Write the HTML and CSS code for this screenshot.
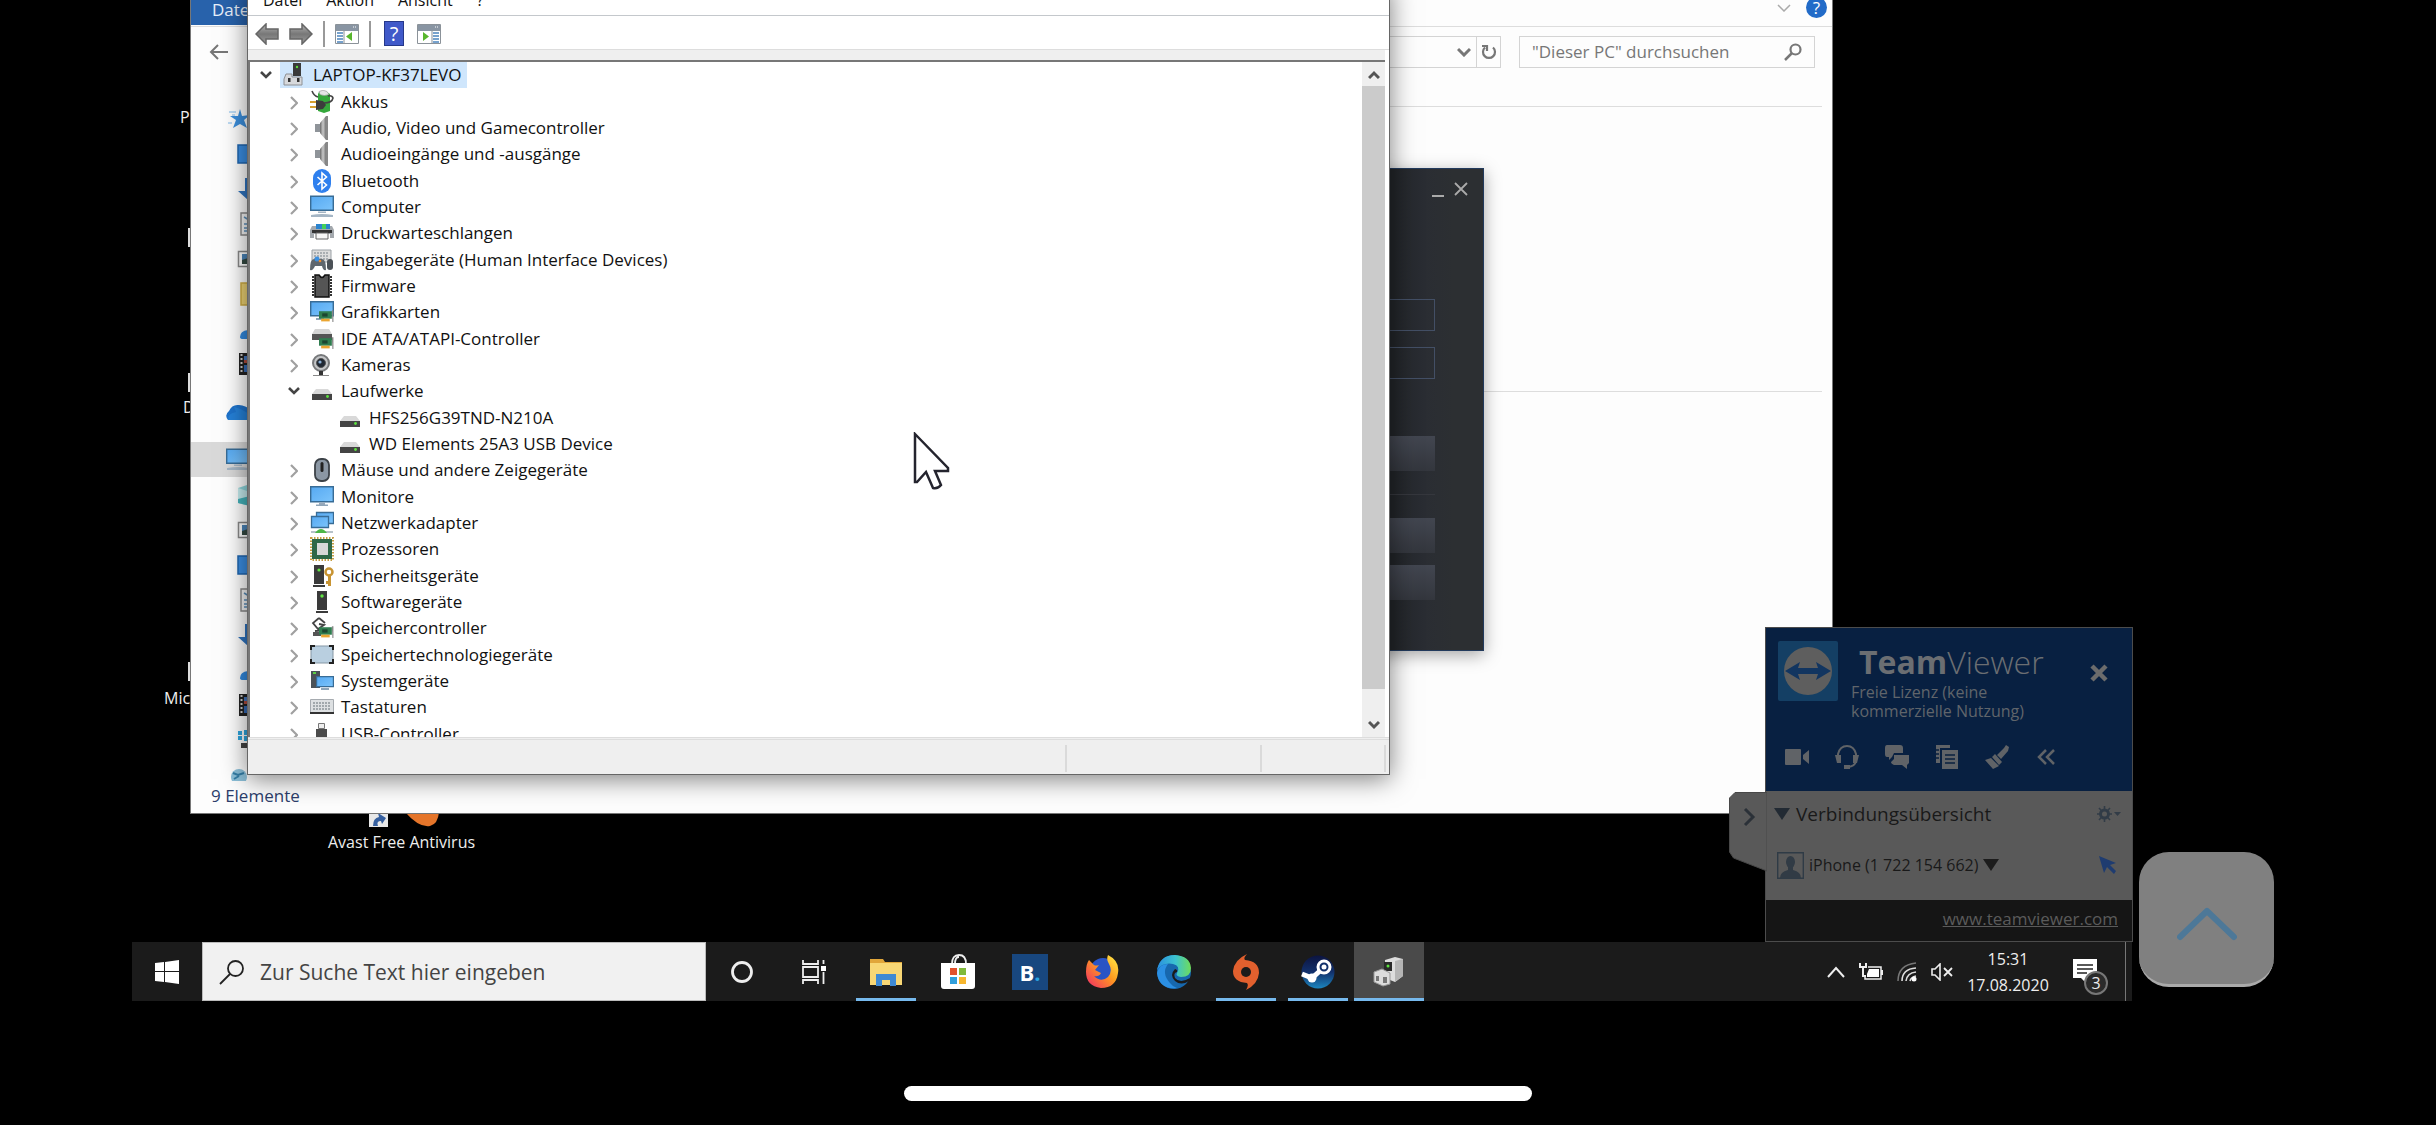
FILE: index.html
```html
<!DOCTYPE html>
<html lang="de">
<head>
<meta charset="utf-8">
<title>Geräte-Manager</title>
<link rel="stylesheet" href="styles.css">
</head>
<body>
<svg class="sprite" aria-hidden="true">
  <defs>
    <linearGradient id="blue" x1="0" y1="0" x2="1" y2="1"><stop offset="0" stop-color="#56a9f2"/><stop offset="1" stop-color="#7cc4fb"/></linearGradient>
    <linearGradient id="metal" x1="0" x2="1"><stop offset="0" stop-color="#6a6a6a"/><stop offset=".5" stop-color="#c9c9c9"/><stop offset="1" stop-color="#777"/></linearGradient>
    <linearGradient id="gray" x1="0" y1="0" x2="0" y2="1"><stop offset="0" stop-color="#b4b4b4"/><stop offset=".5" stop-color="#777"/><stop offset="1" stop-color="#9c9c9c"/></linearGradient>
    <linearGradient id="edge" x1="0" y1="0" x2="1" y2="0"><stop offset="0" stop-color="#2a8fe0"/><stop offset=".55" stop-color="#3cc3cf"/><stop offset="1" stop-color="#6fdc5a"/></linearGradient>
    <linearGradient id="fire" x1="1" y1="0" x2="0" y2="1"><stop offset="0" stop-color="#fff04a"/><stop offset=".45" stop-color="#ff9a1f"/><stop offset="1" stop-color="#f0256b"/></linearGradient>
    <linearGradient id="steam" x1="0" y1="0" x2="0" y2="1"><stop offset="0" stop-color="#0c1440"/><stop offset=".5" stop-color="#12306b"/><stop offset="1" stop-color="#1c86bf"/></linearGradient>
  </defs>
  <symbol id="open" viewBox="0 0 12 8"><path d="M1 1l5 5 5-5" fill="none" stroke="#444" stroke-width="2.6"/></symbol>
  <symbol id="closed" viewBox="0 0 8 14"><path d="M1 1l6 6-6 6" fill="none" stroke="#a0a0a0" stroke-width="2.2"/></symbol>
  <symbol id="card" viewBox="0 0 14 12"><path d="M12 1h1.500v11h-1z" fill="#888"/><path d="M0 2h12v7H0z" fill="#2f7d4f"/><path d="M3 4h5v3H3z" fill="#1c4630"/><path d="M2 9h8v2.500H2z" fill="#eaa531"/></symbol>
  <symbol id="pcroot" viewBox="0 0 24 24"><path d="M11 0h8v13h-8z" fill="#3b3b3b"/><circle cx="15" cy="4" r="1.200" fill="#5bdc3c"/><path d="M4 11h6v3h10v8H2v-6z" fill="#d7d9dc" stroke="#8e9094" stroke-width="1"/><path d="M6 15h2.500v4H6zM15 15h2.500v4H15z" fill="#333"/></symbol>
  <symbol id="battery" viewBox="0 0 24 24"><path d="M9 2l6-1 5 3v17l-6 2-6-2V4z" fill="#35a83b"/><path d="M9 1.500q4-2.500 8 0l2 3q-5 2-9 0z" fill="#e5e5e5" stroke="#999" stroke-width=".6"/><path d="M2 1q2 5 6 6M14 13q8 0 9-5-1-3-5-2" fill="none" stroke="#444" stroke-width="1.600"/><path d="M6 10l7 1 3 4-3 4-7 1z" fill="#3c3c3c"/><path d="M0 12h6M0 17h6" stroke="#d6a030" stroke-width="1.800"/></symbol>
  <symbol id="speaker" viewBox="0 0 24 24"><path d="M5 8h5v8H5z" fill="#8f9499"/><path d="M10 7l6-7v24l-6-7z" fill="url(#metal)"/><path d="M16 0h2v24h-2z" fill="#888"/></symbol>
  <symbol id="bluetooth" viewBox="0 0 24 24"><rect x="3" y="0" width="18" height="24" rx="9" fill="#2f80ee"/><path d="M7.500 8l9 8-4.500 4V4l4.500 4-9 8" fill="none" stroke="#fff" stroke-width="1.600"/></symbol>
  <symbol id="monitor" viewBox="0 0 24 24"><path d="M.7 1.700h22.600v15H.7z" fill="url(#blue)" stroke="#386c96" stroke-width="1.400"/><path d="M9 17.500h6v2.500H9z" fill="#9ab"/><path d="M6 19.500h12v1.500H6z" fill="#8fa5b8"/></symbol>
  <symbol id="computer" viewBox="0 0 24 24"><path d="M.7 1.200h22.600v14H.7z" fill="url(#blue)" stroke="#386c96" stroke-width="1.400"/><path d="M8 16.500h8v1.500H8zM1 20q11-2 22 0v2H1z" fill="#a5b6c5"/></symbol>
  <symbol id="printer" viewBox="0 0 24 24"><path d="M6 3h14v6H6z" fill="#2b83cf"/><path d="M12 3h4v5h-4z" fill="#44cf59"/><path d="M2 5h4v3h14V5h2l2 4v8h-4v-4H4v4H0V9z" fill="#a3a8ad"/><path d="M2 9h20v3H2z" fill="#333"/><path d="M6 12h12v6H6z" fill="#f7f7f7" stroke="#666"/></symbol>
  <symbol id="hid" viewBox="0 0 24 24"><path d="M2 2h19v12H2z" fill="#ddd" stroke="#9ba1a6"/><path d="M4 5h15M4 8h15M4 11h15" stroke="#989ea4" stroke-width="1.500" stroke-dasharray="2 1"/><path d="M0 22q0-11 4-11h8q4 0 4 11-3 1-4-4H5q-2 5-5 4z" fill="#5f676e"/><circle cx="7" cy="11" r="2.500" fill="#3b8fe0"/><circle cx="10" cy="13" r="1.300" fill="#f08c2c"/><rect x="17" y="11" width="6" height="11" rx="3" fill="#4b5157"/></symbol>
  <symbol id="chip" viewBox="0 0 24 24"><path d="M3 2v21M21 2v21" stroke="#333" stroke-width="2" stroke-dasharray="2 1"/><path d="M5 1h4q3 5 6 0h4v22H5z" fill="#555" stroke="#111" stroke-width="1.500"/></symbol>
  <symbol id="gpu" viewBox="0 0 24 24"><path d="M.7 1.700h22.600v14H.7z" fill="url(#blue)" stroke="#386c96" stroke-width="1.400"/><path d="M6 18h8v2H6z" fill="#8fa5b8"/><use href="#card" x="9" y="9" width="15" height="13"/></symbol>
  <symbol id="ide" viewBox="0 0 24 24"><path d="M5 2h14l3 5H2z" fill="#d5d5d5"/><path d="M2 7h20v6H2z" fill="#555"/><use href="#card" x="9" y="9" width="15" height="13"/></symbol>
  <symbol id="camera" viewBox="0 0 24 24"><circle cx="11" cy="10" r="8" fill="#c3c5c7" stroke="#77797b" stroke-width="2"/><circle cx="11" cy="10" r="4.500" fill="#202833" stroke="#555"/><circle cx="10" cy="9" r="1.600" fill="#8ab0d7"/><path d="M9 18h4v4H9z" fill="#333"/><path d="M3 22.500h16" stroke="#888"/></symbol>
  <symbol id="drive" viewBox="0 0 24 24"><path d="M6 10h12l4 5H2z" fill="#d9d9d9"/><path d="M2 15h20v6H2z" fill="#444"/><circle cx="17.500" cy="17.500" r="1.400" fill="#5ce23f"/></symbol>
  <symbol id="mouse" viewBox="0 0 24 24"><rect x="5" y="1" width="14" height="22" rx="6" fill="#8b97a4" stroke="#3c4248" stroke-width="1.800"/><rect x="10.500" y="4" width="3" height="10" rx="1.500" fill="#222"/></symbol>
  <symbol id="network" viewBox="0 0 24 24"><path d="M6.500 1.500h17v11h-17z" fill="url(#blue)" stroke="#386c96" stroke-width="1.300"/><path d="M1.500 5.500h17v11h-17z" fill="url(#blue)" stroke="#386c96" stroke-width="1.300"/><path d="M1 20h22v2H1z" fill="#b7c2c9"/><path d="M5 22q6-8 12 0z" fill="#4cb748"/></symbol>
  <symbol id="cpu" viewBox="0 0 24 24"><path d="M1 1h22v22H1z" fill="none" stroke="#c69e43" stroke-width="2" stroke-dasharray="1.500 1.500"/><path d="M2 2h20v20H2z" fill="#2f6848"/><path d="M7 6h11v12H7z" fill="#d8d8d8"/></symbol>
  <symbol id="security" viewBox="0 0 24 24"><path d="M4 1h10v19H4zM3 21h12v2H3z" fill="#3a3a3a"/><circle cx="9" cy="6" r="1.600" fill="#61e544"/><circle cx="19" cy="8" r="3.500" fill="none" stroke="#c89432" stroke-width="2.500"/><path d="M18 11h3v11h-3zM16 17h2v3h-2z" fill="#c89432"/></symbol>
  <symbol id="software" viewBox="0 0 24 24"><path d="M7 1h10v19H7zM6 21h12v2H6z" fill="#3a3a3a"/><circle cx="12" cy="6" r="1.700" fill="#61e544"/></symbol>
  <symbol id="storagectl" viewBox="0 0 24 24"><path d="M9 2l6 5M9 2L3 7l5 6 6-4-5-1M5 15l12-1" fill="none" stroke="#444" stroke-width="1.800"/><path d="M3 16h8v4H3z" fill="#555"/><use href="#card" x="9" y="9" width="15" height="13"/></symbol>
  <symbol id="storagetech" viewBox="0 0 24 24"><rect x="1" y="3" width="22" height="17" rx="2" fill="#b9cfe0" stroke="#8597a5"/><path d="M1 7V3h4M19 3h4v4M23 16v4h-4M5 20H1v-4" fill="none" stroke="#222" stroke-width="2"/></symbol>
  <symbol id="system" viewBox="0 0 24 24"><path d="M1 2h9v17H1z" fill="#4a5157"/><path d="M3 3h3v2H3z" fill="#5ccf45"/><path d="M6.600 7.600h16.800v10H6.600z" fill="url(#blue)" stroke="#386c96" stroke-width="1.200"/><path d="M11 19h8v2h-8z" fill="#8fa5b8"/></symbol>
  <symbol id="keyboard" viewBox="0 0 24 24"><path d="M.5 4.500h23v13H.5z" fill="#dde0e2" stroke="#a6abb0"/><path d="M3 8h18M3 11h18M3 14h18" stroke="#8d959b" stroke-width="1.600" stroke-dasharray="2 1"/><path d="M0 17h24v2H0z" fill="#333"/></symbol>
  <symbol id="usb" viewBox="0 0 24 24"><path d="M8.500 1.500h6v5h-6z" fill="#eee" stroke="#777"/><path d="M6 7h11v17H6z" fill="#4b4b4b"/></symbol>

  <symbol id="n-star" viewBox="0 0 24 24"><path d="M14 2l2 7 8-1-6 5 3 8-7-4-7 4 3-8-6-4 8 0z" fill="#3c8fdd"/><path d="M3 5h7M2 16h4M6 8h3" stroke="#7db8ea"/></symbol>
  <symbol id="n-desktop" viewBox="0 0 24 24"><path d="M1 3h23v18H1z" fill="#3a8de2" stroke="#1f65b0" stroke-width="1.500"/></symbol>
  <symbol id="n-down" viewBox="0 0 24 24"><path d="M8 1h6v13h7L11 23 1 14h7z" fill="#2f74c0"/></symbol>
  <symbol id="n-doc" viewBox="0 0 24 24"><path d="M4 1h17v22H4z" fill="#f4f4f4" stroke="#888" stroke-width="1.400"/><path d="M7 5l5 3M7 12h9M7 16h9M7 19h9" stroke="#5c8fba" stroke-width="1.500"/></symbol>
  <symbol id="n-pic" viewBox="0 0 24 24"><path d="M1.500 4.500h22v15h-22z" fill="#fff" stroke="#888" stroke-width="1.500"/><path d="M5 7h18v10H5z" fill="#4d86ba"/><path d="M5 13l6-2 12 4v2H5z" fill="#344a43"/></symbol>
  <symbol id="n-folder" viewBox="0 0 24 24"><path d="M4 1h18v22H4z" fill="#eed374" stroke="#d0ad43" stroke-width="1.500"/></symbol>
  <symbol id="n-cloudlet" viewBox="0 0 24 24"><path d="M3 20q0-6 8-7v9H6q-3 0-3-2z" fill="#328ae0"/></symbol>
  <symbol id="n-film" viewBox="0 0 24 24"><path d="M2 1h22v22H2z" fill="#222"/><path d="M4.500 2v20" stroke="#ccc" stroke-width="2" stroke-dasharray="2 2"/><path d="M7 4h13v7H7z" fill="#4576bd"/><path d="M7 13h13v7H7z" fill="#3469b5"/><path d="M7 8h6v3H7z" fill="#b04b3e"/></symbol>
  <symbol id="n-onedrive" viewBox="0 0 24 24"><path d="M2 20q-4-5 1-9 3-7 10-6 8 1 12 5v10z" fill="#1e73cc"/><path d="M8 7q7 1 16 8v5H2q0-7 8-8z" fill="#2a8ae0" opacity=".6"/></symbol>
  <symbol id="n-cube" viewBox="0 0 24 24"><path d="M1 5l12-4 11 4v15l-11 3-12-3z" fill="#8fd6dc"/><path d="M1 5l12 4v14L1 20z" fill="#c5ecee"/><path d="M1 16l12-3v10L1 20z" fill="#45b3bb"/></symbol>
  <symbol id="n-win" viewBox="0 0 24 24"><path d="M1 3h4v4H1zM7 2h6v5H7zM1 8h4v4H1zM7 8h6v5H7z" fill="#2fa5dd"/><path d="M4 15h20v5H4z" fill="#444"/></symbol>
  <symbol id="n-net" viewBox="0 0 24 24"><circle cx="13" cy="14" r="8" fill="#8bbfd8"/><path d="M7 10l5 2 6-2M8 16l5-3" stroke="#347da5" stroke-width="2" fill="none"/></symbol>
</svg>

<main class="remote">
  <div class="desktop">
    <span class="shortcut shortcut-p">P</span>
    <span class="shortcut shortcut-d">D</span>
    <span class="shortcut shortcut-mic">Mic</span>
    <a class="shortcut shortcut-avast" href="#">
      <svg width="72" height="16" viewBox="0 0 72 16"><path d="M0 0h19v15H0z" fill="#e8e8e8"/><path d="M4 14q0-8 6-9l-1-4 8 5-4 6-1-3q-5 0-3 5z" fill="#355f9f"/><path d="M36 0q14 16 25 14Q69 12 70 0z" fill="#e5752a"/></svg>
      Avast Free Antivirus
    </a>
    <i class="badge badge-a"></i>
    <i class="badge badge-b"></i>
    <i class="badge badge-c"></i>

    <section class="window explorer" aria-label="Dieser PC">
      <header class="ribbon">
        <button class="ribbon-tab">Date</button>
        <div class="ribbon-end">
          <svg width="14" height="8" viewBox="0 0 14 8"><path d="M1 1l6 6 6-6" fill="none" stroke="#aaa" stroke-width="1.500"/></svg>
          <button class="help-round" aria-label="Hilfe">?</button>
        </div>
      </header>
      <div class="addressbar">
        <button class="plain back" aria-label="Zurück"><svg width="20" height="16" viewBox="0 0 20 16"><path d="M9 1L2 8l7 7M2 8h17" fill="none" stroke="#777" stroke-width="2"/></svg></button>
        <div class="address">
          <button class="plain" aria-label="Verlauf"><svg width="14" height="10" viewBox="0 0 14 10"><path d="M1 2l6 6 6-6" fill="none" stroke="#777" stroke-width="3"/></svg></button>
          <button class="plain refresh" aria-label="Aktualisieren"><svg width="16" height="18" viewBox="0 0 16 18"><path d="M12 4.500A6 6 0 1 1 4 4.500M1 3h5v5" fill="none" stroke="#777" stroke-width="2.200"/></svg></button>
        </div>
        <label class="searchbox">
          <input type="search" placeholder="&quot;Dieser PC&quot; durchsuchen" aria-label="Dieser PC durchsuchen">
          <svg width="18" height="18" viewBox="0 0 18 18"><circle cx="11.500" cy="6.500" r="5" fill="none" stroke="#777" stroke-width="2.200"/><path d="M8 10l-7 7" stroke="#777" stroke-width="2.500"/></svg>
        </label>
      </div>
      <div class="explorer-main">
        <nav class="nav" aria-label="Navigation">
          <a href="#" class="top"><svg><use href="#n-star"/></svg></a>
          <a href="#"><svg><use href="#n-desktop"/></svg></a>
          <a href="#"><svg><use href="#n-down"/></svg></a>
          <a href="#"><svg><use href="#n-doc"/></svg></a>
          <a href="#"><svg><use href="#n-pic"/></svg></a>
          <a href="#"><svg><use href="#n-folder"/></svg></a>
          <a href="#"><svg><use href="#n-cloudlet"/></svg></a>
          <a href="#"><svg><use href="#n-film"/></svg></a>
          <a href="#" class="top group"><svg><use href="#n-onedrive"/></svg></a>
          <a href="#" class="top group current"><svg><use href="#computer"/></svg></a>
          <a href="#"><svg><use href="#n-cube"/></svg></a>
          <a href="#"><svg><use href="#n-pic"/></svg></a>
          <a href="#"><svg><use href="#n-desktop"/></svg></a>
          <a href="#"><svg><use href="#n-doc"/></svg></a>
          <a href="#"><svg><use href="#n-down"/></svg></a>
          <a href="#"><svg><use href="#n-cloudlet"/></svg></a>
          <a href="#"><svg><use href="#n-film"/></svg></a>
          <a href="#"><svg><use href="#n-win"/></svg></a>
          <a href="#" class="top"><svg><use href="#n-net"/></svg></a>
        </nav>
        <div class="files"><hr><hr></div>
      </div>
      <footer class="explorer-status"><span>9 Elemente</span></footer>
    </section>

    <section class="window steam" aria-label="Anmeldung">
      <header class="steam-title">
        <button class="plain" aria-label="Minimieren"><svg width="12" height="16" viewBox="0 0 12 16"><path d="M0 14h12" stroke="#aaa" stroke-width="2"/></svg></button>
        <button class="plain" aria-label="Schließen"><svg width="14" height="14" viewBox="0 0 14 14"><path d="M1 1l12 12M13 1L1 13" stroke="#aaa" stroke-width="1.800"/></svg></button>
      </header>
      <form class="steam-form">
        <input type="text" aria-label="Name">
        <input type="password" aria-label="Kennwort">
        <button type="button" class="login" aria-label="Anmelden"></button>
        <hr>
        <button type="button" aria-label="Konto erstellen"></button>
        <button type="button" aria-label="Hilfe"></button>
      </form>
    </section>

    <section class="window devmgr" aria-label="Geräte-Manager">
      <nav class="menubar"><button>Datei</button><button>Aktion</button><button>Ansicht</button><button>?</button></nav>
      <div class="toolbar">
        <button class="plain" aria-label="Zurück"><svg width="24" height="22" viewBox="0 0 24 22"><path d="M1 11L11 1v5h12v10H11v5z" fill="url(#gray)" stroke="#666" stroke-width="1.500"/></svg></button>
        <button class="plain" aria-label="Vor"><svg width="24" height="22" viewBox="0 0 24 22"><path d="M23 11L13 1v5H1v10h12v5z" fill="url(#gray)" stroke="#666" stroke-width="1.500"/></svg></button>
        <i class="divider"></i>
        <button class="plain" aria-label="Struktur"><svg width="24" height="20" viewBox="0 0 24 20"><path d="M.5.500h23v19H.5z" fill="#fff" stroke="#8b9299"/><path d="M1 1h22v6H1z" fill="#8995a3"/><path d="M18 3h4" stroke="#fff" stroke-dasharray="1 1"/><path d="M2 9h6M2 12h6M2 15h6M2 18h6" stroke="#4b84bd" stroke-width="1.300"/><path d="M9 7v12" stroke="#8b9299"/><path d="M17 8v9l-6-4.500z" fill="#58b62d"/></svg></button>
        <i class="divider"></i>
        <button class="plain help-square" aria-label="Hilfe">?</button>
        <button class="plain" aria-label="Aktionen"><svg width="24" height="20" viewBox="0 0 24 20"><path d="M.5.500h23v19H.5z" fill="#fff" stroke="#8b9299"/><path d="M1 1h22v6H1z" fill="#8995a3"/><path d="M18 3h4" stroke="#fff" stroke-dasharray="1 1"/><path d="M16 9h6M16 12h6M16 15h6M16 18h6" stroke="#4b84bd" stroke-width="1.300"/><path d="M15 7v12" stroke="#8b9299"/><path d="M6 8v9l6-4.500z" fill="#58b62d"/></svg></button>
      </div>
      <div class="treebox">
        <ul class="tree">
          <li class="root"><svg class="tw"><use href="#open" width="12" height="8" x="8" y="9"/></svg><span class="selected"><svg><use href="#pcroot"/></svg>LAPTOP-KF37LEVO</span></li>
          <li><svg class="tw"><use href="#closed" width="8" height="14" x="10" y="7"/></svg><svg><use href="#battery"/></svg>Akkus</li>
          <li><svg class="tw"><use href="#closed" width="8" height="14" x="10" y="7"/></svg><svg><use href="#speaker"/></svg>Audio, Video und Gamecontroller</li>
          <li><svg class="tw"><use href="#closed" width="8" height="14" x="10" y="7"/></svg><svg><use href="#speaker"/></svg>Audioeingänge und -ausgänge</li>
          <li><svg class="tw"><use href="#closed" width="8" height="14" x="10" y="7"/></svg><svg><use href="#bluetooth"/></svg>Bluetooth</li>
          <li><svg class="tw"><use href="#closed" width="8" height="14" x="10" y="7"/></svg><svg><use href="#computer"/></svg>Computer</li>
          <li><svg class="tw"><use href="#closed" width="8" height="14" x="10" y="7"/></svg><svg><use href="#printer"/></svg>Druckwarteschlangen</li>
          <li><svg class="tw"><use href="#closed" width="8" height="14" x="10" y="7"/></svg><svg><use href="#hid"/></svg>Eingabegeräte (Human Interface Devices)</li>
          <li><svg class="tw"><use href="#closed" width="8" height="14" x="10" y="7"/></svg><svg><use href="#chip"/></svg>Firmware</li>
          <li><svg class="tw"><use href="#closed" width="8" height="14" x="10" y="7"/></svg><svg><use href="#gpu"/></svg>Grafikkarten</li>
          <li><svg class="tw"><use href="#closed" width="8" height="14" x="10" y="7"/></svg><svg><use href="#ide"/></svg>IDE ATA/ATAPI-Controller</li>
          <li><svg class="tw"><use href="#closed" width="8" height="14" x="10" y="7"/></svg><svg><use href="#camera"/></svg>Kameras</li>
          <li><svg class="tw"><use href="#open" width="12" height="8" x="8" y="9"/></svg><svg><use href="#drive"/></svg>Laufwerke</li>
          <li class="leaf"><svg><use href="#drive"/></svg>HFS256G39TND-N210A</li>
          <li class="leaf"><svg><use href="#drive"/></svg>WD Elements 25A3 USB Device</li>
          <li><svg class="tw"><use href="#closed" width="8" height="14" x="10" y="7"/></svg><svg><use href="#mouse"/></svg>Mäuse und andere Zeigegeräte</li>
          <li><svg class="tw"><use href="#closed" width="8" height="14" x="10" y="7"/></svg><svg><use href="#monitor"/></svg>Monitore</li>
          <li><svg class="tw"><use href="#closed" width="8" height="14" x="10" y="7"/></svg><svg><use href="#network"/></svg>Netzwerkadapter</li>
          <li><svg class="tw"><use href="#closed" width="8" height="14" x="10" y="7"/></svg><svg><use href="#cpu"/></svg>Prozessoren</li>
          <li><svg class="tw"><use href="#closed" width="8" height="14" x="10" y="7"/></svg><svg><use href="#security"/></svg>Sicherheitsgeräte</li>
          <li><svg class="tw"><use href="#closed" width="8" height="14" x="10" y="7"/></svg><svg><use href="#software"/></svg>Softwaregeräte</li>
          <li><svg class="tw"><use href="#closed" width="8" height="14" x="10" y="7"/></svg><svg><use href="#storagectl"/></svg>Speichercontroller</li>
          <li><svg class="tw"><use href="#closed" width="8" height="14" x="10" y="7"/></svg><svg><use href="#storagetech"/></svg>Speichertechnologiegeräte</li>
          <li><svg class="tw"><use href="#closed" width="8" height="14" x="10" y="7"/></svg><svg><use href="#system"/></svg>Systemgeräte</li>
          <li><svg class="tw"><use href="#closed" width="8" height="14" x="10" y="7"/></svg><svg><use href="#keyboard"/></svg>Tastaturen</li>
          <li><svg class="tw"><use href="#closed" width="8" height="14" x="10" y="7"/></svg><svg><use href="#usb"/></svg>USB-Controller</li>
        </ul>
        <div class="scrollbar">
          <svg width="12" height="24" viewBox="0 0 12 24"><path d="M1 16l5-5 5 5" fill="none" stroke="#555" stroke-width="3"/></svg>
          <div class="thumb"></div>
          <svg width="12" height="24" viewBox="0 0 12 24"><path d="M1 9l5 5 5-5" fill="none" stroke="#555" stroke-width="3"/></svg>
        </div>
      </div>
      <footer class="devmgr-status"><span></span><span></span><span></span></footer>
    </section>

    <svg class="pointer" width="40" height="60" viewBox="0 0 40 60"><path d="M2 2l33 34v3H22l6 14q-3 4-8 3l-7-16-9 10H2z" fill="#fff" stroke="#24242e" stroke-width="2.500"/></svg>

    <aside class="tv" aria-label="TeamViewer">
      <button class="tv-tab" aria-label="Ausblenden"><svg width="38" height="80" viewBox="0 0 38 80"><path d="M38 .500H6L.5 6v54l4 6L38 79z" fill="#595959" stroke="#484848"/><path d="M16 17l8 8-8 8" fill="none" stroke="#2b3138" stroke-width="3"/></svg></button>
      <header class="tv-head">
        <svg class="tv-logo" width="60" height="60" viewBox="0 0 60 60"><rect width="60" height="60" rx="2" fill="#143f64"/><circle cx="30" cy="30" r="24" fill="#5e5e5e"/><path d="M7 30l15-9-2 6h20l-2-6 15 9-15 9 2-6H20l2 6z" fill="#123560"/></svg>
        <div class="tv-name"><h1><b>Team</b>Viewer</h1><p>Freie Lizenz (keine<br>kommerzielle Nutzung)</p></div>
        <button class="plain tv-close" aria-label="Schließen"><svg width="20" height="20" viewBox="0 0 20 20"><path d="M3 3l14 14M17 3L3 17" stroke="#6c6c6c" stroke-width="4.500"/></svg></button>
      </header>
      <div class="tv-tools">
        <button class="plain" aria-label="Video"><svg viewBox="0 0 24 24"><rect x="0" y="4" width="16" height="16" rx="1" fill="#606367"/><path d="M18 10l6-5v14l-6-5z" fill="#606367"/></svg></button>
        <button class="plain" aria-label="Audio"><svg viewBox="0 0 24 24"><path d="M3 12V9q2-8 9-8t9 8v6q0 6-8 7" fill="none" stroke="#606367" stroke-width="2"/><path d="M0 10h6v8H2zM18 10h6l-2 8h-4zM9 20h6v4H9z" fill="#606367"/></svg></button>
        <button class="plain" aria-label="Chat"><svg viewBox="0 0 24 24"><path d="M2 0h13q3 0 3 3v5H9l-2 4-3 3v-3H2q-2 0-2-3V3q0-3 2-3zM9 10h15v8l-2 2v4l-5-4H9q-3-1-3-3l3-3z" fill="#606367"/></svg></button>
        <button class="plain" aria-label="Dateien"><svg viewBox="0 0 24 24"><path d="M1 0h14v3H5v15H1zM7 5h16v19H7z" fill="#606367"/><path d="M10 10h10M10 14h10M10 18h10M1 5h3M1 9h3M1 13h3" stroke="#08203f" stroke-width="1.600"/></svg></button>
        <button class="plain" aria-label="Whiteboard"><svg viewBox="0 0 24 24"><path d="M21 0l3 2-1 4-7 8-4-4 7-7zM10 9l7 8-3 3-7-8zM6 13l8 8-6 3-8-9z" fill="#606367"/></svg></button>
        <button class="plain" aria-label="Weniger"><svg viewBox="0 0 24 24"><path d="M11 5l-7 7 7 7M19 5l-7 7 7 7" fill="none" stroke="#606367" stroke-width="2.500"/></svg></button>
      </div>
      <div class="tv-body">
        <div class="tv-row tv-section"><svg width="16" height="12" viewBox="0 0 16 12"><path d="M0 0h16L8 12z" fill="#222a33"/></svg><h2>Verbindungsübersicht</h2>
          <button class="plain" aria-label="Einstellungen"><svg width="24" height="16" viewBox="0 0 24 16"><circle cx="7.500" cy="8" r="4" fill="none" stroke="#323c47" stroke-width="3"/><path d="M7.500 0v16M0 8h15M2 2l11 12M13 2L2 14" stroke="#323c47" stroke-width="1.600"/><circle cx="7.500" cy="8" r="2.500" fill="#595959"/><path d="M17 6h7l-3.500 4z" fill="#323c47"/></svg></button></div>
        <div class="tv-row tv-user"><svg width="27" height="27" viewBox="0 0 27 27"><path d="M.7.700h25.600v25.600H.7z" fill="none" stroke="#2f3b46" stroke-width="1.400"/><ellipse cx="13.500" cy="10" rx="4.500" ry="6" fill="#313b45"/><path d="M3 26q0-6 8-8v-3h5v3q8 2 8 8z" fill="#313b45"/></svg><span>iPhone (1 722 154 662)</span><svg width="16" height="12" viewBox="0 0 16 12"><path d="M0 0h16L8 12z" fill="#1c1c1c"/></svg>
          <button class="plain" aria-label="Zeiger"><svg width="18" height="18" viewBox="0 0 18 18"><path d="M0 0l17 7-6 2 6 6-2 3-7-7-3 6z" fill="#1f3c70"/></svg></button></div>
      </div>
      <footer class="tv-foot"><a href="#">www.teamviewer.com</a></footer>
    </aside>
  </div>

  <div class="taskbar">
    <button class="start" aria-label="Start"><svg width="24" height="24" viewBox="0 0 24 24"><path d="M0 3l9-1v9H0zM10 2l14-2v11H10zM0 12h9v10l-9-1zM10 12h14v12l-14-2z" fill="#fff"/></svg></button>
    <label class="tasksearch"><svg width="26" height="26" viewBox="0 0 26 26"><circle cx="16.500" cy="9.500" r="7.500" fill="none" stroke="#222" stroke-width="1.800"/><path d="M11 15L1 25" stroke="#222" stroke-width="1.800"/></svg><input type="text" placeholder="Zur Suche Text hier eingeben" aria-label="Suche"></label>
    <div class="apps">
      <button aria-label="Cortana"><svg width="24" height="24" viewBox="0 0 24 24"><circle cx="12" cy="12" r="9.500" fill="none" stroke="#eee" stroke-width="2.800"/></svg></button>
      <button aria-label="Taskansicht"><svg width="24" height="24" viewBox="0 0 24 24"><path d="M1 0v4h15V0M1 24v-4h15v4M1 7h15v10H1zM21.500 0v4M21.500 12v12" fill="none" stroke="#eee" stroke-width="1.800"/><path d="M19 6h5v5h-5z" fill="#fff"/></svg></button>
      <button class="running" aria-label="Explorer"><svg width="32" height="28" viewBox="0 0 32 28"><path d="M0 1h13l2 3h17v23H0z" fill="#e1a63a"/><path d="M0 5h32v22H0z" fill="#f8d775"/><path d="M6 16h20v12h-6v-6h-8v6H6z" fill="#3f8ad4"/></svg></button>
      <button aria-label="Store"><svg width="36" height="36" viewBox="0 0 36 36"><path d="M12 10q0-9 7-9t7 9M15 10q0-7 4-7" fill="none" stroke="#eee" stroke-width="1.800"/><path d="M1 9h34v23q0 3-3 3H4q-3 0-3-3z" fill="#fff"/><path d="M10 14h7v7h-7z" fill="#e2512c"/><path d="M19 14h7v7h-7z" fill="#80b93a"/><path d="M10 23h7v7h-7z" fill="#319fdc"/><path d="M19 23h7v7h-7z" fill="#f7b62e"/></svg></button>
      <button aria-label="Booking"><span class="booking">B<i>.</i></span></button>
      <button aria-label="Firefox"><svg width="34" height="34" viewBox="0 0 34 34"><circle cx="18" cy="16" r="13" fill="#2a54c5"/><path d="M4 5l5 5q2 1 5 0l-4 5 6 3q-2 4-7 3 7 7 14 1 5-6 1-13-3-4-1-9 12 6 10 18-2 15-17 15Q1 31 1 17q0-8 3-12z" fill="url(#fire)"/></svg></button>
      <button aria-label="Edge"><svg width="36" height="36" viewBox="0 0 36 36"><circle cx="18" cy="18" r="17" fill="#1768ae"/><path d="M1 16Q4 1 19 1q15 1 16 13 0 9-10 9-6-1-4-4 4-7-4-9Q7 8 1 16z" fill="url(#edge)"/><path d="M1 19q2-9 11-9-7 9 2 19 3 4 7 5Q3 36 1 19z" fill="#2b8fe3"/><path d="M21 18q-4 1-2 6 5 6 15 0l-1 3q-8 5-14 0-6-6 0-12 3 1 2 3z" fill="#1b1b1b"/></svg></button>
      <button class="running" aria-label="Origin"><svg width="28" height="36" viewBox="0 0 28 36"><path d="M15 0q-4 4-2 6 14 1 14 13Q26 30 14 36q3-5 1-7Q1 28 1 17 2 6 15 0z" fill="#e2602e"/><circle cx="14" cy="18" r="5" fill="#1b1b1b"/></svg></button>
      <button class="running" aria-label="Steam"><svg width="34" height="34" viewBox="0 0 34 34"><circle cx="17" cy="17" r="16.500" fill="url(#steam)"/><path d="M1 19l10 4 9-8" fill="none" stroke="#fff" stroke-width="5"/><circle cx="23" cy="12" r="6" fill="#12306b" stroke="#fff" stroke-width="3"/><circle cx="23" cy="12" r="2.500" fill="#fff"/><circle cx="11" cy="23" r="4.500" fill="#fff"/></svg></button>
      <button class="running active" aria-label="Geräte-Manager"><svg width="34" height="32" viewBox="0 0 34 32"><path d="M13 4l10-3 8 2v17l-8 6-10-4z" fill="#ddd"/><path d="M23 5l8-2v17l-8 6z" fill="#b5b5b5"/><path d="M12 6h8v9h-8z" fill="#292929"/><circle cx="16" cy="10" r="1.500" fill="#5ce23f"/><path d="M2 16l8-3 8 4v11l-7 2-9-4z" fill="#dcdcdc" stroke="#999"/><path d="M4 20h3v5H4zM11 21h4v6h-4z" fill="#777"/></svg></button>
    </div>
    <div class="tray">
      <svg width="18" height="12" viewBox="0 0 18 12"><path d="M1 11l8-9 8 9" fill="none" stroke="#eee" stroke-width="2"/></svg>
      <svg width="24" height="18" viewBox="0 0 24 18"><path d="M1 0v4h6V0M4 5v8h3" fill="none" stroke="#eee" stroke-width="2"/><path d="M9 4h13v12H6v-4" fill="none" stroke="#eee" stroke-width="1.500"/><path d="M10 6h10v8H8v-3z" fill="#fff"/><path d="M22 7h2v5h-2z" fill="#eee"/></svg>
      <svg width="20" height="20" viewBox="0 0 20 20"><path d="M1 19Q1 3 19 1" fill="none" stroke="#777" stroke-width="1.500"/><path d="M5 19Q5 7 19 6M9 19q1-8 10-9M13 19q1-4 6-5" fill="none" stroke="#ddd" stroke-width="1.600"/><circle cx="17" cy="17" r="2.500" fill="#fff"/></svg>
      <svg width="22" height="18" viewBox="0 0 22 18"><path d="M1 6h3l5-5v16l-5-5H1z" fill="none" stroke="#eee" stroke-width="1.600"/><path d="M13 5l8 8M21 5l-8 8" stroke="#eee" stroke-width="1.800"/></svg>
      <time class="clock"><span>15:31</span><span>17.08.2020</span></time>
      <button class="plain notes" aria-label="Benachrichtigungen"><svg width="24" height="26" viewBox="0 0 24 26"><path d="M0 0h24v19H14v6l-6-6H0z" fill="#fff"/><path d="M4 6h16M4 10h16M4 14h10" stroke="#222" stroke-width="1.600"/></svg><span class="count">3</span></button>
    </div>
  </div>
</main>
<button class="expand" aria-label="Leiste öffnen"><svg width="60" height="34" viewBox="0 0 60 34"><path d="M3 30L30 4l27 26" fill="none" stroke="#4d7898" stroke-width="6" stroke-linecap="round" stroke-linejoin="round"/></svg></button>
<div class="home"></div>
</body>
</html>
```
FILE: styles.css
```css
* { box-sizing: border-box; }
body { margin: 0; min-height: 100vh; display: flex; flex-direction: column; background: #000; color: #111; font: 16px/20px "Open Sans", "Noto Sans", sans-serif; position: relative; overflow: hidden; }
button, input { font: inherit; color: inherit; margin: 0; border-radius: 0; }
button { padding: 0; border: 0; background: none; }
svg { display: block; flex: none; }
.sprite { position: absolute; width: 0; height: 0; }
.plain { display: flex; align-items: center; justify-content: center; }

.remote { flex: 1; display: flex; flex-direction: column; margin: 0 304px 0 132px; }
.desktop { position: relative; flex: 1; }
.window { position: absolute; display: flex; flex-direction: column; font-size: 17px; }

.shortcut { position: absolute; color: #eee; text-decoration: none; }
.shortcut-p { left: 48px; top: 107px; }
.shortcut-d { left: 51px; top: 397px; }
.shortcut-mic { left: 32px; top: 688px; }
.shortcut-avast { left: 196px; top: 812px; display: flex; flex-direction: column; gap: 4px; white-space: nowrap; }
.shortcut-avast svg { margin-left: 41px; }
.badge { position: absolute; left: 56px; width: 19px; height: 19px; background: #ddd; }
.badge-a { top: 228px; }
.badge-b { top: 373px; }
.badge-c { top: 662px; }

/* Explorer */
.explorer { left: 58px; right: 299px; top: 0; bottom: 128px; background: #fdfdfd; border: 1px solid #777; border-top: 0; }
.ribbon { display: flex; justify-content: space-between; height: 27px; border-bottom: 1px solid #ddd; }
.ribbon-tab { width: 84px; height: 25px; padding: 0 0 8px 21px; text-align: left; background: #2862ab; color: #e8f0fa; }
.ribbon-end { display: flex; align-items: flex-start; gap: 15px; padding-right: 5px; }
.ribbon-end svg { margin-top: 4px; }
.help-round { width: 21px; height: 21px; margin-top: -3px; border-radius: 50%; background: #226bc8; color: #fff; }
.addressbar { display: flex; align-items: center; padding: 9px 17px 9px 18px; }
.back { width: 20px; }
.address { flex: 1; display: flex; justify-content: flex-end; height: 32px; margin: 0 18px 0 60px; border: 1px solid #d4d4d4; }
.address .plain { width: 24px; }
.address .refresh { border-left: 1px solid #d4d4d4; }
.searchbox { display: flex; align-items: center; width: 296px; height: 32px; padding: 0 12px; border: 1px solid #d4d4d4; }
.searchbox input { flex: 1; min-width: 0; border: 0; padding: 0; background: none; outline: 0; }
.searchbox input::placeholder { color: #777; opacity: 1; }
.explorer-main { flex: 1; display: flex; min-height: 0; }
.nav { width: 160px; padding-top: 24px; overflow: hidden; }
.nav a { display: flex; align-items: center; height: 35px; padding-left: 46px; }
.nav a.top { padding-left: 35px; }
.nav a.group { margin-top: 13px; }
.nav a.current { background: #d9d9d9; }
.nav svg { width: 24px; height: 24px; }
.files { flex: 1; padding: 29px 10px 0 0; }
.files hr { margin: 0 0 284px; border: 0; border-top: 1px solid #ddd; }
.explorer-status { height: 32px; padding: 5px 20px; color: #2c3d6b; }

/* Sign-in window */
.steam { right: 648px; width: 300px; top: 168px; bottom: 291px; border: 1px solid #223a5c; background: linear-gradient(90deg, #222529 70%, #2a2d33 80%, #2c2f32 90%); box-shadow: 0 4px 16px rgba(0,0,0,.35); }
.steam-title { display: flex; justify-content: flex-end; align-items: flex-start; gap: 10px; padding: 13px 15px 0 0; height: 130px; }
.steam-form { display: flex; flex-direction: column; padding: 0 48px 0 40px; }
.steam-form input { height: 32px; margin-bottom: 16px; border: 1px solid #434f65; background: transparent; }
.steam-form button { height: 35px; margin-bottom: 12px; background: linear-gradient(#424650, #33363d); }
.steam-form .login { margin: 41px 0 23px; }
.steam-form hr { width: 100%; margin: 0 0 23px; border: 0; border-top: 1px solid #35373d; }

/* Device manager */
.devmgr { left: 115px; right: 742px; top: -17px; bottom: 167px; background: #fff; border: 1px solid #666; box-shadow: 0 4px 24px rgba(0,0,0,.5); }
.menubar { display: flex; gap: 24px; height: 32px; padding-left: 15px; border-bottom: 1px solid #c4c8cc; font-size: 16px; }
.toolbar { display: flex; align-items: center; gap: 10px; height: 34px; padding: 2px 0 0 7px; border-bottom: 1px solid #ddd; }
.divider { width: 2px; height: 26px; background: #999; }
.help-square { width: 20px; height: 25px; margin: 0 3px; border: 1px solid #26388a; background: #4059c9; color: #fff; font-size: 20px; }
.treebox { flex: 1; min-height: 0; display: flex; margin-right: 4px; border-top: 10px solid #efefef; overflow: hidden; }
.tree { flex: 1; height: 687px; margin: 0; padding: 0; list-style: none; display: grid; grid-auto-rows: 1fr; border: 2px solid #777; border-width: 2px 0 0 2px; }
.tree li { display: flex; align-items: center; padding-left: 30px; white-space: nowrap; }
.tree li.root { padding-left: 2px; }
.tree li.leaf { padding-left: 86px; }
.tree svg { width: 24px; height: 24px; margin: 0 7px 0 2px; }
.tree svg.tw { width: 28px; height: 26px; margin: 0; }
.selected { display: flex; align-items: center; height: 26px; padding-right: 6px; background: #cfe6fc; }
.scrollbar { width: 23px; display: flex; flex-direction: column; align-items: center; background: #efefef; border-top: 2px solid #777; }
.thumb { flex: 1; width: 23px; margin-bottom: 24px; background: #cbcbcb; }
.devmgr-status { display: grid; grid-template-columns: 819px 195px 124px; height: 37px; padding: 5px 0 2px; background: #efefef; border-top: 3px double #ddd; }
.devmgr-status span { border-right: 2px solid #dadada; }
.pointer { position: absolute; left: 781px; top: 432px; }

/* TeamViewer panel */
.tv { position: absolute; right: -1px; top: 627px; bottom: 0; width: 368px; display: flex; flex-direction: column; border: 1px solid #4c4c4c; background: #082041; }
.tv-tab { position: absolute; left: -37px; top: 164px; }
.tv-head { display: flex; align-items: flex-start; padding: 13px 23px 0 12px; }
.tv-name { flex: 1; padding-left: 13px; color: #60656b; }
.tv-name h1 { margin: 0 0 0 8px; font-size: 32px; line-height: 42px; font-weight: 300; color: #6b6e72; }
.tv-name h1 b { font-weight: 700; }
.tv-name p { margin: 0; line-height: 19px; white-space: nowrap; }
.tv-close { margin-top: 22px; }
.tv-tools { flex: 1; display: flex; gap: 26px; align-items: center; padding: 2px 19px 0; }
.tv-tools svg { width: 24px; height: 24px; }
.tv-body { height: 109px; background: #595959; color: #191919; }
.tv-row { display: flex; align-items: center; padding: 0 11px 0 8px; gap: 6px; }
.tv-row .plain { margin-left: auto; }
.tv-section { height: 45px; }
.tv-section h2 { margin: 0; font-size: 19px; line-height: 24px; font-weight: 400; }
.tv-user { height: 58px; padding: 0 15px 0 11px; gap: 5px; }
.tv-foot { height: 41px; padding: 8px 14px; text-align: right; background: #151515; font-size: 17px; line-height: 22px; }
.tv-foot a { color: #5b5b5b; }

/* Taskbar */
.taskbar { display: flex; height: 59px; background: #1b1b1b; color: #eee; }
.start { width: 70px; display: flex; align-items: center; justify-content: center; }
.tasksearch { width: 504px; display: flex; align-items: center; gap: 15px; padding: 0 16px; background: #f1f1f1; border: 1px solid #bbb; }
.tasksearch input { flex: 1; border: 0; background: none; font-size: 21px; outline: 0; padding: 0; }
.tasksearch input::placeholder { color: #444; opacity: 1; }
.apps { display: flex; }
.apps button { width: 72px; display: flex; align-items: center; justify-content: center; border: solid transparent; border-width: 3px 0; background-clip: padding-box; }
.apps .running { background: linear-gradient(#76b9ed, #76b9ed) no-repeat center bottom / 60px 3px border-box; }
.apps .active { width: 70px; background: linear-gradient(#76b9ed, #76b9ed) no-repeat center bottom / 72px 3px border-box, #4a4a4a; background-clip: border-box; }
.booking { width: 36px; height: 36px; background: #18477f; color: #fff; font-size: 22px; line-height: 36px; font-weight: 700; }
.booking i { font-style: normal; color: #2ba3e2; }
.tray { margin-left: auto; display: flex; align-items: center; gap: 14px; padding-right: 33px; border-right: 2px solid #1b1b1b; box-shadow: inset -4px 0 #1b1b1b, inset -5px 0 #777; }
.clock { display: flex; flex-direction: column; width: 82px; text-align: center; line-height: 26px; }
.notes { position: relative; margin-left: 10px; }
.count { position: absolute; left: 11px; top: 12px; width: 24px; height: 24px; border: 2px solid #777; border-radius: 50%; background: #2b2b2b; line-height: 20px; }

.expand { position: absolute; right: 162px; bottom: 138px; width: 135px; height: 135px; padding-top: 12px; border-radius: 30px; background: #808080; border-bottom: 3px solid #aaa; display: flex; align-items: center; justify-content: center; }
.home { width: 628px; height: 15px; margin: 85px auto 24px; border-radius: 8px; background: #fff; }
```
